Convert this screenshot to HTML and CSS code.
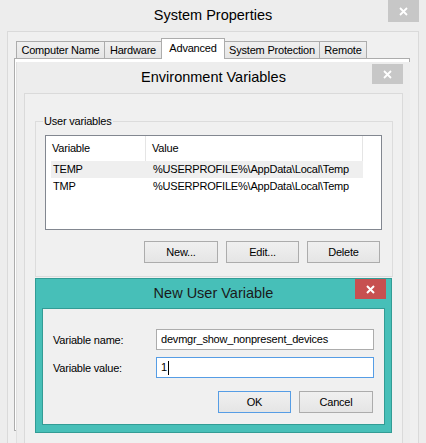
FILE: index.html
```html
<!DOCTYPE html>
<html>
<head>
<meta charset="utf-8">
<title>System Properties</title>
<link rel="stylesheet" href="styles.css">
</head>
<body>
<div class="desktop">
  <div class="win sys">
    <div class="titlebar sys-title">
      <span>System Properties</span>
      <div class="close close-sys"><svg width="9" height="9" viewBox="0 0 9 9"><path d="M1 1L8 8M8 1L1 8" stroke="#fff" stroke-width="1.8" fill="none"/></svg></div>
    </div>
    <div class="client sys-client">
      <div class="tabs">
        <div class="tab t1">Computer Name</div>
        <div class="tab t2">Hardware</div>
        <div class="tab t3 active">Advanced</div>
        <div class="tab t4">System Protection</div>
        <div class="tab t5">Remote</div>
      </div>
      <div class="tabpanel"></div>
    </div>
  </div>

  <div class="win env">
    <div class="titlebar env-title">
      <span>Environment Variables</span>
      <div class="close close-env"><svg width="9" height="9" viewBox="0 0 9 9"><path d="M1 1L8 8M8 1L1 8" stroke="#fff" stroke-width="1.8" fill="none"/></svg></div>
    </div>
    <div class="client env-client">
      <fieldset class="group">
        <legend>User variables</legend>
        <div class="listbox">
          <div class="lv-head">
            <div class="hcol hc1">Variable</div>
            <div class="hcol hc2">Value</div>
          </div>
          <div class="lv-row sel"><div class="c1">TEMP</div><div class="c2">%USERPROFILE%\AppData\Local\Temp</div></div>
          <div class="lv-row"><div class="c1">TMP</div><div class="c2">%USERPROFILE%\AppData\Local\Temp</div></div>
        </div>
        <div class="btnrow">
          <div class="btn b-new">New...</div>
          <div class="btn">Edit...</div>
          <div class="btn">Delete</div>
        </div>
      </fieldset>
    </div>
  </div>

  <div class="win dlg">
    <div class="titlebar dlg-title">
      <span>New User Variable</span>
      <div class="close close-dlg"><svg width="9" height="9" viewBox="0 0 9 9"><path d="M1 1L8 8M8 1L1 8" stroke="#fff" stroke-width="2" fill="none"/></svg></div>
    </div>
    <div class="client dlg-client">
      <div class="form">
        <div class="lbl">Variable name:</div>
        <div class="field">devmgr_show_nonpresent_devices</div>
        <div class="lbl">Variable value:</div>
        <div class="field focus">1<span class="caret"></span></div>
      </div>
      <div class="dlg-btns">
        <div class="btn default">OK</div>
        <div class="btn b-cancel">Cancel</div>
      </div>
    </div>
  </div>
</div>
</body>
</html>
```

FILE: styles.css
```css
* { box-sizing: border-box; }
body {
  margin: 0;
  font-family: "Liberation Sans", Arial, sans-serif;
  font-size: 11px;
  letter-spacing: -0.2px;
  color: #000;
}
.desktop {
  position: relative;
  width: 426px;
  height: 443px;
  overflow: hidden;
  background: #ededed;
}
.win { position: absolute; }

.titlebar {
  position: relative;
  text-align: center;
  font-size: 14.5px;
  letter-spacing: 0;
  color: #000;
}
.close {
  position: absolute;
  width: 31px;
  display: flex;
  align-items: center;
  justify-content: center;
}
.close svg { display: block; }

/* System Properties */
.sys {
  left: 0;
  top: 0;
  width: 426px;
  height: 470px;
  background: #ededed;
  padding: 0 7px;
}
.sys-title { height: 31px; line-height: 30px; }
.close-sys { top: 0; right: 0; height: 22px; background: #c7c7c7; }
.sys-client {
  border: 1px solid #dadada;
  background: #f0f0f0;
  height: 430px;
  padding: 6px 0 0 6px;
}
.tabs {
  display: flex;
  align-items: flex-end;
  height: 20px;
  margin-left: 2px;
}
.tab {
  height: 17px;
  line-height: 16px;
  border: 1px solid #acacac;
  border-bottom: 0;
  background: linear-gradient(#f0f0f0, #e5e5e5);
  text-align: center;
  margin-left: -1px;
  white-space: nowrap;
}
.tab.t1 { margin-left: 0; width: 89px; }
.tab.t2 { width: 58px; }
.tab.t3 { width: 64px; }
.tab.t4 { width: 96px; }
.tab.t5 { width: 48px; }
.tab.active {
  height: 21px;
  line-height: 18px;
  background: #fff;
  margin-bottom: -1px;
  position: relative;
  z-index: 1;
}
.tabpanel {
  width: 396px;
  height: 373px;
  border: 1px solid #acacac;
  background: #fff;
}

/* Environment Variables */
.env {
  left: 16px;
  top: 62px;
  width: 394px;
  height: 400px;
  background: #ededed;
  padding: 0 7px;
  border-left: 1px solid #e0e0e0;
}
.env-title { height: 31px; line-height: 31px; }
.close-env { top: 2px; right: 0; height: 20px; background: #c7c7c7; }
.env-client {
  border: 1px solid #dadada;
  background: #f0f0f0;
  height: 360px;
  padding: 0 0 0 10px;
}
.group {
  margin: 19px 0 0 0;
  width: 358px;
  border: 1px solid #dcdcdc;
  padding: 0 0 13px 9px;
}
.group legend {
  padding: 0 1px;
  margin-left: -2px;
  line-height: 16px;
}
.listbox {
  margin-top: 6px;
  width: 337px;
  height: 95px;
  border: 1px solid #828790;
  background: #fff;
}
.lv-head {
  display: flex;
  height: 25px;
  line-height: 25px;
}
.hcol { border-right: 1px solid #e5e5e5; padding-left: 6px; }
.hc1 { width: 100px; }
.hc2 { width: 217px; }
.lv-row {
  display: flex;
  margin-left: 5px;
  width: 312px;
  height: 17px;
  line-height: 17px;
}
.lv-row.sel { background: #efefef; }
.lv-row .c1 { width: 100px; padding-left: 2px; }
.lv-row .c2 { padding-left: 2px; white-space: nowrap; }

.btnrow {
  margin-top: 11px;
  width: 337px;
  padding-right: 2px;
  display: flex;
  justify-content: flex-end;
  gap: 8px;
}
.btn {
  width: 73px;
  height: 22px;
  line-height: 20px;
  border: 1px solid #acacac;
  background: linear-gradient(#f0f0f0, #e5e5e5);
  text-align: center;
}
.btn.b-new { width: 74px; }

/* New User Variable */
.dlg {
  left: 35px;
  top: 278px;
  width: 357px;
  height: 155px;
  background: #47bfb8;
  border: 1px solid #329c95;
  padding: 0 6px 7px;
  z-index: 5;
}
.dlg-title { height: 29px; line-height: 29px; color: #1a1a1a; }
.close-dlg { top: 0; right: -1px; height: 20px; background: #c75050; }
.dlg-client {
  border: 1px solid #329c95;
  background: #f0f0f0;
  height: 117px;
  padding: 20px 10px 0 10px;
}
.form {
  display: grid;
  grid-template-columns: 103px 218px;
  row-gap: 7px;
  align-items: center;
}
.field {
  height: 21px;
  line-height: 19px;
  border: 1px solid #acacac;
  background: #fff;
  padding-left: 4px;
  white-space: nowrap;
  display: flex;
  align-items: center;
}
.field.focus { border-color: #569de5; }
.caret {
  display: inline-block;
  width: 1px;
  height: 14px;
  background: #000;
  margin-left: 1px;
}
.dlg-btns {
  margin-top: 13px;
  width: 321px;
  padding-right: 1px;
  display: flex;
  justify-content: flex-end;
  gap: 8px;
}
.btn.default { border-color: #569de5; }
.btn.b-cancel { width: 74px; }
```
